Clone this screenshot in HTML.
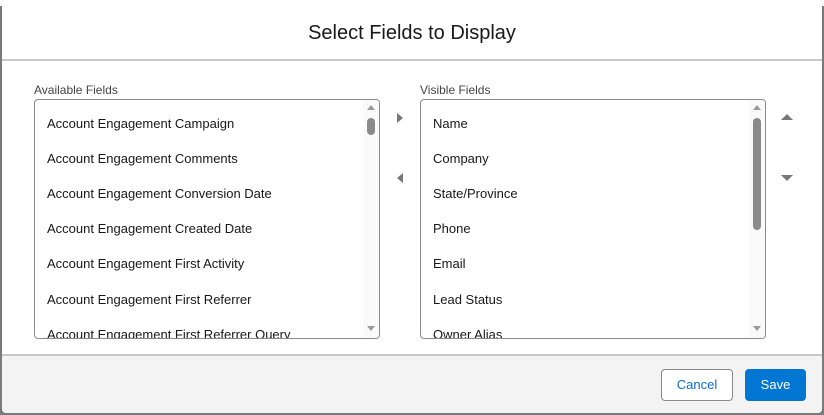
<!DOCTYPE html>
<html><head><style>
*{box-sizing:border-box;margin:0;padding:0}
body{width:824px;height:415px;overflow:hidden;background:#7a7a7a;font-family:"Liberation Sans",sans-serif;position:relative}
.top{position:absolute;left:0;top:0;width:824px;height:6px;background:#fff}
.modal{position:absolute;left:2px;top:2px;width:820px;height:411px;background:#fff;border-radius:4px;overflow:hidden}
.hdr{position:absolute;left:0;top:0;width:820px;height:59px;border-bottom:2px solid #c9c9c9;text-align:center;font-size:20px;line-height:62px;color:#181818}
.lbl{position:absolute;font-size:12px;color:#444}
.box{position:absolute;top:97px;width:346px;height:240px;border:1px solid #8a8a8a;border-radius:4px;overflow:hidden}
.item{position:absolute;left:12px;font-size:13px;color:#181818;white-space:nowrap}
.sb{position:absolute;right:0;top:0;width:16px;height:100%;background:#fafafa}
.thumb{position:absolute;left:4px;width:8px;border-radius:4px;background:#8a8a8a}
.tri{position:absolute;width:0;height:0}
.ftr{position:absolute;left:0;top:352px;width:820px;height:60px;background:#f3f3f3;border-top:2px solid #c9c9c9}
.btn{position:absolute;top:367px;height:32px;border-radius:4px;font-size:13px;text-align:center;line-height:30px}
</style></head><body>
<div class="top"></div>
<div class="modal">
<div class="hdr">Select Fields to Display</div>
<div class="lbl" style="left:32px;top:81px">Available Fields</div>
<div class="lbl" style="left:418px;top:81px">Visible Fields</div>
<div class="box" style="left:32px">
<div class="item" style="top:16px">Account Engagement Campaign</div>
<div class="item" style="top:51px">Account Engagement Comments</div>
<div class="item" style="top:86px">Account Engagement Conversion Date</div>
<div class="item" style="top:121px">Account Engagement Created Date</div>
<div class="item" style="top:156px">Account Engagement First Activity</div>
<div class="item" style="top:192px">Account Engagement First Referrer</div>
<div class="item" style="top:227px">Account Engagement First Referrer Query</div>
<div class="sb"><div class="tri" style="left:4px;top:5px;border:4px solid transparent;border-bottom:5px solid #999;border-top:0"></div><div class="thumb" style="top:18px;height:17px"></div><div class="tri" style="left:4px;top:226px;border:4px solid transparent;border-top:5px solid #999;border-bottom:0"></div></div>
</div>
<div class="box" style="left:418px">
<div class="item" style="top:16px">Name</div>
<div class="item" style="top:51px">Company</div>
<div class="item" style="top:86px">State/Province</div>
<div class="item" style="top:121px">Phone</div>
<div class="item" style="top:156px">Email</div>
<div class="item" style="top:192px">Lead Status</div>
<div class="item" style="top:227px">Owner Alias</div>
<div class="sb"><div class="tri" style="left:4px;top:5px;border:4px solid transparent;border-bottom:5px solid #999;border-top:0"></div><div class="thumb" style="top:18px;height:112px"></div><div class="tri" style="left:4px;top:226px;border:4px solid transparent;border-top:5px solid #999;border-bottom:0"></div></div>
</div>
<div class="tri" style="left:395px;top:111px;border:5px solid transparent;border-left:6px solid #777;border-right:0"></div>
<div class="tri" style="left:395px;top:171px;border:5px solid transparent;border-right:6px solid #777;border-left:0"></div>
<div class="tri" style="left:779px;top:112px;border:6px solid transparent;border-bottom:6px solid #777;border-top:0"></div>
<div class="tri" style="left:779px;top:173px;border:6px solid transparent;border-top:6px solid #777;border-bottom:0"></div>
<div class="ftr"></div>
<div class="btn" style="left:659px;width:72px;background:#fff;border:1px solid #8a8a8a;color:#0b6cd0">Cancel</div>
<div class="btn" style="left:743px;width:61px;background:#0176d3;color:#fff;line-height:32px">Save</div>
</div>
</body></html>
